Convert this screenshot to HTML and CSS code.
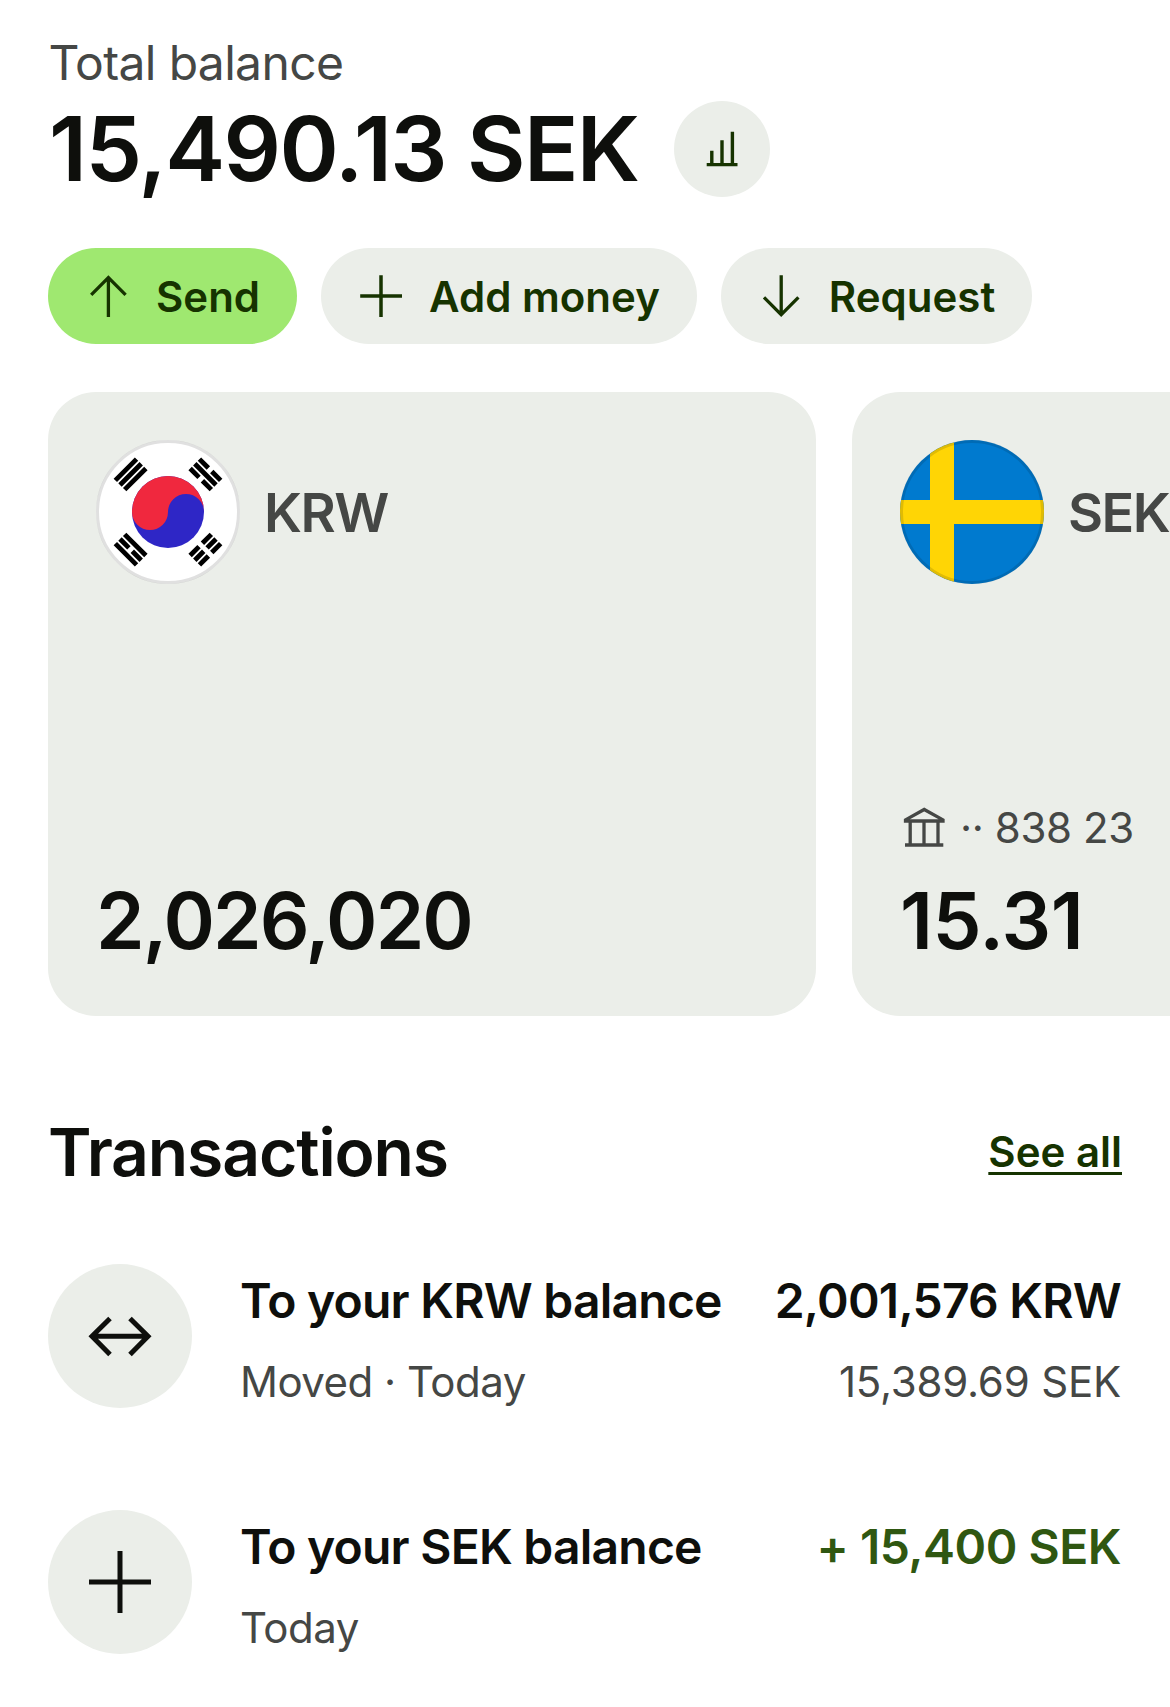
FILE: index.html
```html
<!DOCTYPE html>
<html lang="en">
<head>
    <meta charset="UTF-8">
    <meta name="viewport" content="width=device-width, initial-scale=1.0">
    <title>Balances</title>
    <link rel="stylesheet" href="styles.css">
</head>
<body>

    <header class="summary">
        <p class="summary-label">Total balance</p>
        <div class="summary-row">
            <h1 class="summary-total">15,490.13 SEK</h1>
            <button class="chart-button" aria-label="Insights">
                <svg width="48" height="48" viewBox="0 0 48 48" fill="none" stroke="currentColor" stroke-width="3.4">
                    <path d="M8.7 39.6H39.5M13.8 39V25.7M24 39V15.2M34.4 39V6.7"/>
                </svg>
            </button>
        </div>
    </header>

    <div class="actions">
        <button class="action action-primary">
            <svg width="48" height="48" viewBox="0 0 48 48" fill="none" stroke="currentColor" stroke-width="3.3">
                <path d="M24.4 45V5M7.2 22.8L24.4 5.6L41.6 22.8"/>
            </svg>
            <span>Send</span>
        </button>
        <button class="action">
            <svg width="48" height="48" viewBox="0 0 48 48" fill="none" stroke="currentColor" stroke-width="3.5">
                <path d="M24 3.2V45M3.2 24H45"/>
            </svg>
            <span>Add money</span>
        </button>
        <button class="action">
            <svg width="48" height="48" viewBox="0 0 48 48" fill="none" stroke="currentColor" stroke-width="3.3">
                <path d="M24.2 3.2V43M7 25.4L24.2 42.6L41.4 25.4"/>
            </svg>
            <span>Request</span>
        </button>
    </div>

    <div class="cards">
        <div class="card">
            <div class="card-top">
                <svg class="flag" viewBox="-72 -72 144 144">
                    <circle r="72" fill="#fff"/>
                    <circle r="36" fill="#2e26c6"/>
                    <path fill="#f0283e" d="M-36 0A36 36 0 0 1 36 0A18 18 0 0 0 0 0A18 18 0 0 1-36 0Z"/>
                    <g stroke="#000" stroke-width="4.8">
                        <path transform="translate(-37.4 -37.6) rotate(-45)" d="M-15-6.6H15M-15 0H15M-15 6.6H15"/>
                        <path transform="translate(37.4 -37.6) rotate(45)" d="M-15-6.6H-2.4M2.4-6.6H15M-15 0H15M-15 6.6H-2.4M2.4 6.6H15"/>
                        <path transform="translate(-37.4 37.6) rotate(45)" d="M-15-6.6H15M-15 0H-2.4M2.4 0H15M-15 6.6H15"/>
                        <path transform="translate(37.4 37.6) rotate(-45)" d="M-15-6.6H-2.4M2.4-6.6H15M-15 0H-2.4M2.4 0H15M-15 6.6H-2.4M2.4 6.6H15"/>
                    </g>
                    <circle r="70.5" fill="none" stroke="#000" stroke-opacity=".12" stroke-width="3"/>
                </svg>
                <span class="currency">KRW</span>
            </div>
            <div class="card-bottom">
                <p class="amount amount-long">2,026,020</p>
            </div>
        </div>

        <div class="card">
            <div class="card-top">
                <svg class="flag" viewBox="0 0 144 144">
                    <clipPath id="round"><circle cx="72" cy="72" r="72"/></clipPath>
                    <g clip-path="url(#round)">
                        <path fill="#007acf" d="M0 0H144V144H0z"/>
                        <path fill="#ffd505" d="M30 0H54V144H30zM0 60H144V84H0z"/>
                    </g>
                    <circle cx="72" cy="72" r="70.5" fill="none" stroke="#000" stroke-opacity=".12" stroke-width="3"/>
                </svg>
                <span class="currency">SEK</span>
            </div>
            <div class="card-bottom">
                <p class="account">
                    <svg width="48" height="48" viewBox="0 0 48 48" fill="none" stroke="currentColor" stroke-width="3.3">
                        <path d="M5 42H43.3M10.2 41.5V17.5M24 41.5V17.5M38 41.5V17.5M5.5 18V16.9L24.2 6.5L43 16.9V18z"/>
                    </svg>
                    <span>·· 838 23</span>
                </p>
                <p class="amount">15.31</p>
            </div>
        </div>
    </div>

    <section class="transactions">
        <div class="section-header">
            <h2>Transactions</h2>
            <a href="#" class="see-all">See all</a>
        </div>

        <div class="transaction">
            <div class="transaction-icon">
                <svg width="72" height="72" viewBox="0 0 72 72" fill="none" stroke="currentColor" stroke-width="5">
                    <path d="M7 36.3H65M26 18.5L8 36.3L26 54.5M46 18.5L64 36.3L46 54.5"/>
                </svg>
            </div>
            <div class="transaction-info">
                <p class="title">To your KRW balance</p>
                <p class="detail">Moved · Today</p>
            </div>
            <div class="transaction-value">
                <p class="title">2,001,576 KRW</p>
                <p class="detail">15,389.69 SEK</p>
            </div>
        </div>

        <div class="transaction">
            <div class="transaction-icon">
                <svg width="72" height="72" viewBox="0 0 72 72" fill="none" stroke="currentColor" stroke-width="5">
                    <path d="M36 5V67M5 36H67"/>
                </svg>
            </div>
            <div class="transaction-info">
                <p class="title">To your SEK balance</p>
                <p class="detail">Today</p>
            </div>
            <div class="transaction-value">
                <p class="title positive">+ 15,400 SEK</p>
            </div>
        </div>
    </section>

</body>
</html>
```
FILE: styles.css
```css
*,
*::before,
*::after {
    box-sizing: border-box;
}

body {
    margin: 0;
    padding: 27px 48px 0;
    background-color: #fff;
    color: #0e0f0c;
    font-family: "Inter", sans-serif;
}

p, h1, h2 {
    margin: 0;
    white-space: nowrap;
}

svg {
    display: block;
    flex-shrink: 0;
}

button {
    border: none;
    font-family: inherit;
    color: #163300;
    background-color: #ebeee9;
    cursor: pointer;
}

/* Total balance */
.summary-label {
    font-size: 48px;
    line-height: 72px;
    letter-spacing: -0.65px;
    margin-bottom: 2px;
    padding-left: 0.5px;
    color: #454745;
}

.summary-row {
    display: flex;
    align-items: center;
    gap: 36px;
    height: 96px;
    padding-left: 1px;
}

.summary-total {
    font-size: 90px;
    font-weight: 600;
    line-height: 96px;
    letter-spacing: -1.62px;
}

.chart-button {
    display: flex;
    align-items: center;
    justify-content: center;
    width: 96px;
    height: 96px;
    padding: 0;
    border-radius: 50%;
}

/* Buttons */
.actions {
    display: flex;
    gap: 24px;
    margin-top: 51px;
}

.action {
    display: flex;
    align-items: center;
    gap: 24px;
    height: 96px;
    padding: 0 37px 0 36px;
    border-radius: 48px;
    font-size: 42px;
    font-weight: 600;
    white-space: nowrap;
}

.action-primary {
    background-color: #9fe870;
}

/* Balance cards */
.cards {
    display: flex;
    gap: 36px;
    margin-top: 48px;
    margin-right: -48px;
    overflow: hidden;
}

.card {
    display: flex;
    flex-direction: column;
    justify-content: space-between;
    flex: 0 0 768px;
    height: 624px;
    padding: 48px 48px 47px;
    border-radius: 48px;
    background-color: #ebeee9;
}

.card-top {
    display: flex;
    align-items: center;
    gap: 24px;
}

.flag {
    width: 144px;
    height: 144px;
}

.currency {
    font-size: 54px;
    font-weight: 600;
    letter-spacing: -1.5px;
    color: #454745;
}

.account {
    display: flex;
    align-items: center;
    gap: 12px;
    height: 72px;
    margin-bottom: 10px;
    font-size: 42px;
    letter-spacing: -0.4px;
    color: #454745;
}

.amount {
    font-size: 78px;
    font-weight: 600;
    line-height: 96px;
    letter-spacing: -0.5px;
}

.amount-long {
    letter-spacing: -1.9px;
}

/* Transactions */
.transactions {
    margin-top: 88px;
}

.section-header {
    display: flex;
    align-items: center;
    justify-content: space-between;
    height: 96px;
    margin-bottom: 64px;
}

.section-header h2 {
    font-size: 66px;
    font-weight: 600;
    letter-spacing: -1.15px;
}

.see-all {
    padding-bottom: 2px;
    font-size: 42px;
    font-weight: 600;
    color: #163300;
    text-decoration-thickness: 3px;
    text-underline-offset: 5px;
    text-decoration-skip-ink: none;
}

.transaction {
    display: flex;
    gap: 48px;
    margin-bottom: 95px;
}

.transaction-icon {
    display: flex;
    align-items: center;
    justify-content: center;
    flex-shrink: 0;
    width: 144px;
    height: 144px;
    border-radius: 50%;
    background-color: #ebeee9;
}

.transaction-info {
    flex: 1;
}

.transaction-value {
    padding-right: 1px;
    text-align: right;
}

.title {
    font-size: 48px;
    font-weight: 600;
    line-height: 72px;
    letter-spacing: -0.77px;
    margin: 1px 0 12px;
}

.detail {
    font-size: 42px;
    line-height: 66px;
    letter-spacing: -0.5px;
    color: #454745;
}

.transaction-value .detail {
    letter-spacing: -0.2px;
}

.positive {
    color: #2f5711;
    letter-spacing: -0.5px;
}
```
